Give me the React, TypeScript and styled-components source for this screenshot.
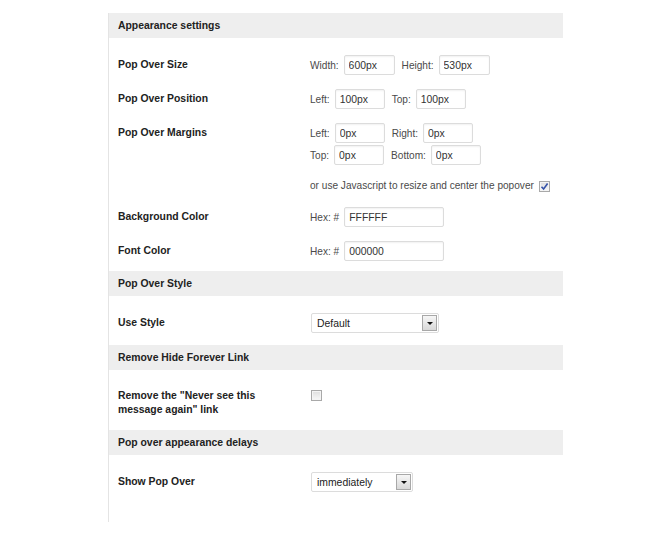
import React from "react"
import styled, { createGlobalStyle } from "styled-components"

const GlobalStyle = createGlobalStyle`
  html, body {
    margin: 0;
    padding: 0;
    background: #ffffff;
  }
  body {
    font-family: "Liberation Sans", Arial, sans-serif;
    font-size: 10.4px;
    color: #222222;
  }
`

const Page = styled.div`
  padding: 13px 0 0 108px;
  width: 455px;
`

const Panel = styled.div`
  border-left: 1px solid #e4e4e4;
`

const SectionHeader = styled.div`
  height: 25px;
  line-height: 25px;
  padding-left: 9px;
  background: #eeeeee;
  font-weight: bold;
  color: #222222;
`

const SectionBody = styled.div<{ $pb: number }>`
  padding: 10px 0 ${(p) => p.$pb}px;
`

const Row = styled.div`
  display: flex;
  align-items: flex-start;
  padding: 7px 0;
`

const Label = styled.div<{ $multi?: boolean }>`
  width: 172px;
  padding: ${(p) => (p.$multi ? "2px 20px 0 9px" : "0 20px 0 9px")};
  line-height: ${(p) => (p.$multi ? "14px" : "20px")};
  font-weight: bold;
  color: #222222;
  flex-shrink: 0;
`

const Controls = styled.div`
  display: flex;
  flex-direction: column;
  gap: 2px;
`

const Line = styled.div`
  display: flex;
  align-items: center;
  height: 20px;
  font-size: 10.1px;
  color: #4a4a4a;
`

const Note = styled.div`
  display: flex;
  align-items: center;
  gap: 5px;
  line-height: 14px;
  font-size: 10.1px;
  color: #4a4a4a;
`

const FieldLabel = styled.span`
  margin-right: 5px;
  &:not(:first-child) {
    margin-left: 7px;
  }
`

const TextInput = styled.input<{ $w: number }>`
  box-sizing: border-box;
  width: ${(p) => p.$w}px;
  height: 20px;
  margin: 0;
  padding: 0 4px;
  border: 1px solid #dcdcdc;
  border-radius: 2px;
  box-shadow: inset 0 1px 2px rgba(0, 0, 0, 0.06);
  font-family: "Liberation Sans", Arial, sans-serif;
  font-size: 10.4px;
  color: #333333;
  background: #ffffff;
  outline: none;
`

const CheckBox = styled.span<{ $checked?: boolean }>`
  display: inline-flex;
  align-items: center;
  justify-content: center;
  box-sizing: border-box;
  width: 11px;
  height: 11px;
  margin: ${(p) => (p.$checked ? "0" : "3px 0 0 1px")};
  border: 1px solid #a9a9a9;
  background: linear-gradient(#dedede, #f8f8f8);
  box-shadow: inset 0 0 0 1px #f4f4f4;
`

const FakeSelect = styled.div<{ $w: number }>`
  box-sizing: border-box;
  display: flex;
  align-items: center;
  justify-content: space-between;
  width: ${(p) => p.$w}px;
  height: 20px;
  margin-left: 1px;
  padding: 0 1px 0 5px;
  border: 1px solid #dcdcdc;
  border-radius: 2px;
  background: #ffffff;
  color: #222222;
`

const SelectArrow = styled.span`
  box-sizing: border-box;
  display: flex;
  align-items: center;
  justify-content: center;
  width: 15px;
  height: 16px;
  border: 1px solid #a8a8a8;
  background: linear-gradient(#f6f6f6, #d8d8d8);
  &::after {
    content: "";
    border-left: 3px solid transparent;
    border-right: 3px solid transparent;
    border-top: 3px solid #111111;
  }
`

const Check = () => (
  <svg width="9" height="9" viewBox="0 0 9 9">
    <path d="M1.5 4.8 L3.6 7 L7.6 1.6" fill="none" stroke="#3552a8" strokeWidth="1.6" />
  </svg>
)

const App = () => (
  <Page>
    <GlobalStyle />
    <Panel>
      <SectionHeader>Appearance settings</SectionHeader>
      <SectionBody $pb={3}>
        <Row>
          <Label>Pop Over Size</Label>
          <Controls>
            <Line>
              <FieldLabel>Width:</FieldLabel>
              <TextInput $w={51} defaultValue="600px" />
              <FieldLabel>Height:</FieldLabel>
              <TextInput $w={51} defaultValue="530px" />
            </Line>
          </Controls>
        </Row>
        <Row>
          <Label>Pop Over Position</Label>
          <Controls>
            <Line>
              <FieldLabel>Left:</FieldLabel>
              <TextInput $w={50} defaultValue="100px" />
              <FieldLabel>Top:</FieldLabel>
              <TextInput $w={50} defaultValue="100px" />
            </Line>
          </Controls>
        </Row>
        <Row>
          <Label>Pop Over Margins</Label>
          <Controls>
            <Line>
              <FieldLabel>Left:</FieldLabel>
              <TextInput $w={50} defaultValue="0px" />
              <FieldLabel>Right:</FieldLabel>
              <TextInput $w={50} defaultValue="0px" />
            </Line>
            <Line>
              <FieldLabel>Top:</FieldLabel>
              <TextInput $w={50} defaultValue="0px" />
              <FieldLabel>Bottom:</FieldLabel>
              <TextInput $w={50} defaultValue="0px" />
            </Line>
          </Controls>
        </Row>
        <Row>
          <Label $multi />
          <Note>
            or use Javascript to resize and center the popover
            <CheckBox $checked>
              <Check />
            </CheckBox>
          </Note>
        </Row>
        <Row>
          <Label>Background Color</Label>
          <Line>
            <FieldLabel>Hex: #</FieldLabel>
            <TextInput $w={100} defaultValue="FFFFFF" />
          </Line>
        </Row>
        <Row>
          <Label>Font Color</Label>
          <Line>
            <FieldLabel>Hex: #</FieldLabel>
            <TextInput $w={100} defaultValue="000000" />
          </Line>
        </Row>
      </SectionBody>

      <SectionHeader>Pop Over Style</SectionHeader>
      <SectionBody $pb={5}>
        <Row>
          <Label>Use Style</Label>
          <FakeSelect $w={128}>
            Default
            <SelectArrow />
          </FakeSelect>
        </Row>
      </SectionBody>

      <SectionHeader>Remove Hide Forever Link</SectionHeader>
      <SectionBody $pb={6}>
        <Row>
          <Label $multi>Remove the "Never see this message again" link</Label>
          <CheckBox />
        </Row>
      </SectionBody>

      <SectionHeader>Pop over appearance delays</SectionHeader>
      <SectionBody $pb={23}>
        <Row>
          <Label>Show Pop Over</Label>
          <FakeSelect $w={102}>
            immediately
            <SelectArrow />
          </FakeSelect>
        </Row>
      </SectionBody>
    </Panel>
  </Page>
)

export default App
